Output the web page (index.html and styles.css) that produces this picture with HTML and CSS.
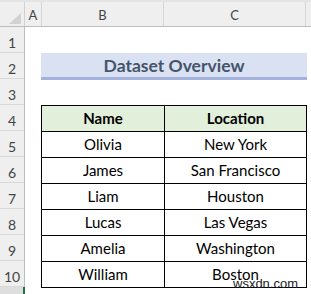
FILE: index.html
```html
<!DOCTYPE html>
<html>
<head>
<meta charset="utf-8">
<link rel="stylesheet" href="styles.css">
</head>
<body>
<div class="sheet">
  <div class="colhead">
    <div class="corner"><span class="tri"></span></div>
    <div class="ch col-a">A</div>
    <div class="ch col-b">B</div>
    <div class="ch col-c">C</div>
    <div class="ch col-rest"></div>
  </div>
  <div class="body">
    <div class="rowheads">
      <div class="rh">1</div>
      <div class="rh">2</div>
      <div class="rh">3</div>
      <div class="rh">4</div>
      <div class="rh">5</div>
      <div class="rh">6</div>
      <div class="rh">7</div>
      <div class="rh">8</div>
      <div class="rh">9</div>
      <div class="rh">10</div>
      <div class="rh sel"></div>
    </div>
    <div class="cells">
      <div class="title">Dataset Overview</div>
      <div class="data">
        <div class="cell head">Name</div>
        <div class="cell head">Location</div>
        <div class="cell">Olivia</div>
        <div class="cell">New York</div>
        <div class="cell">James</div>
        <div class="cell">San Francisco</div>
        <div class="cell">Liam</div>
        <div class="cell">Houston</div>
        <div class="cell">Lucas</div>
        <div class="cell">Las Vegas</div>
        <div class="cell">Amelia</div>
        <div class="cell">Washington</div>
        <div class="cell">William</div>
        <div class="cell">Boston</div>
      </div>
    </div>
  </div>
  <div class="wm">wsxdn.com</div>
</div>
</body>
</html>
```

FILE: styles.css
```css
* { box-sizing: border-box; }
html, body { margin: 0; padding: 0; background: #fff; }
body { font-family: Lato, "Liberation Sans", sans-serif; overflow: hidden; }

.sheet { position: relative; width: 311px; height: 294px; overflow: hidden; }

.colhead {
  display: flex;
  height: 27px;
  border-top: 2px solid #e4e4e4;
  border-bottom: 1px solid #bdbdbd;
  background: #efefef;
}
.corner {
  width: 25px;
  position: relative;
  border-right: 1px solid #d0d0d0;
}
.tri {
  position: absolute;
  right: 3px;
  bottom: 2px;
  width: 0;
  height: 0;
  border-left: 12px solid transparent;
  border-bottom: 11px solid #d2d2d2;
}
.ch {
  font-size: 13px;
  color: #444;
  text-align: center;
  line-height: 26px;
  border-right: 1px solid #d6d6d6;
}
.col-a { width: 17px; }
.col-b { width: 122px; }
.col-c { width: 142px; }
.col-rest { flex: 1; border-right: none; }

.body { display: flex; }
.rowheads {
  width: 25px;
  background: #efefef;
  border-right: 1px solid #bdbdbd;
}
.rh {
  height: 26px;
  border-bottom: 1px solid #d8d8d8;
  font-size: 14px;
  color: #444;
  text-align: center;
  line-height: 31px;
}
.rh.sel {
  background: #dedede;
  border-right: 2px solid #217346;
  margin-right: -1px;
}

.cells {
  padding-left: 16px;
  padding-top: 26px;
}
.title {
  width: 266px;
  height: 27px;
  background: #d9e1f2;
  border-bottom: 3px solid #a2b2dc;
  color: #44546a;
  font-weight: 700;
  font-size: 17.5px;
  text-align: center;
  line-height: 26px;
  margin-bottom: 25px;
}
.data {
  display: grid;
  grid-template-columns: 123px 142px;
  width: 266px;
  border-left: 1px solid #000;
  border-top: 1px solid #000;
}
.cell {
  height: 26px;
  border-right: 1px solid #000;
  border-bottom: 1px solid #000;
  text-align: center;
  font-size: 15px;
  line-height: 25px;
  color: #000;
}
.cell.head {
  background: #e2efda;
  font-weight: 700;
}

.wm {
  position: absolute;
  left: 233px;
  top: 277px;
  font-family: "Liberation Sans", Arial, sans-serif;
  font-size: 13px;
  color: #222;
  line-height: 14px;
}
```
